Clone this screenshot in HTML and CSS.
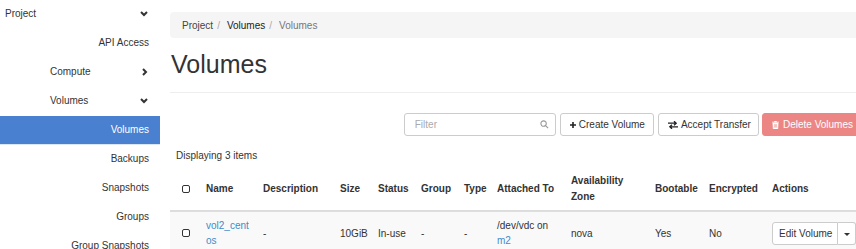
FILE: index.html
```html
<!DOCTYPE html>
<html>
<head>
<meta charset="utf-8">
<link rel="stylesheet" href="styles.css">
</head>
<body>
<div class="layout">
  <nav class="sidebar">
    <div class="nav-row top"><span>Project</span><svg class="chev" viewBox="0 0 8 6" width="8" height="6"><polyline points="1,1 4,4 7,1"/></svg></div>
    <div class="nav-row leaf"><span>API Access</span></div>
    <div class="nav-row group"><span>Compute</span><svg class="chev" viewBox="0 0 6 8" width="6" height="8"><polyline points="1,1 4,4 1,7"/></svg></div>
    <div class="nav-row group"><span>Volumes</span><svg class="chev" viewBox="0 0 8 6" width="8" height="6"><polyline points="1,1 4,4 7,1"/></svg></div>
    <div class="nav-row leaf active"><span>Volumes</span></div>
    <div class="nav-row leaf"><span>Backups</span></div>
    <div class="nav-row leaf"><span>Snapshots</span></div>
    <div class="nav-row leaf"><span>Groups</span></div>
    <div class="nav-row leaf"><span>Group Snapshots</span></div>
  </nav>
  <main class="main">
    <div class="breadcrumb">
      <span class="crumb">Project</span><span class="sep">/</span>
      <span class="crumb mid">Volumes</span><span class="sep">/</span>
      <span class="crumb current">Volumes</span>
    </div>
    <div class="page-header"><h1>Volumes</h1></div>
    <div class="toolbar">
      <div class="filter">
        <span class="placeholder">Filter</span>
        <svg class="search" viewBox="0 0 10 10" width="9" height="9"><circle cx="4" cy="4" r="3"/><line x1="6.2" y1="6.2" x2="9" y2="9"/></svg>
      </div>
      <button class="btn"><svg class="ico" viewBox="0 0 6 6" width="6" height="6"><path d="M2.2 0h1.6v2.2H6v1.6H3.8V6H2.2V3.8H0V2.2h2.2z" fill="#222"/></svg>Create Volume</button>
      <button class="btn accept"><svg class="ico" viewBox="0 0 10 8" width="10" height="8"><path d="M0 2.2h8M6 0.2l2.2 2-2.2 2M10 5.8H2M4 3.8L1.8 5.8 4 7.8" fill="none" stroke="#222" stroke-width="1.3"/></svg>Accept Transfer</button>
      <button class="btn danger"><svg class="ico" viewBox="0 0 8 9" width="7" height="8"><path d="M0 1.3h8M3 1.3V0h2v1.3M1 2.3h6l-.5 6.7h-5z" fill="#fff" stroke="#fff" stroke-width=".8"/><path d="M2.8 3.5v4M4 3.5v4M5.2 3.5v4" stroke="#ec8684" stroke-width=".6"/></svg>Delete Volumes</button>
    </div>
    <div class="count">Displaying 3 items</div>
    <table class="table">
      <colgroup>
        <col class="c-cb"><col class="c-name"><col class="c-desc"><col class="c-size"><col class="c-status"><col class="c-group"><col class="c-type"><col class="c-att"><col class="c-az"><col class="c-boot"><col class="c-enc"><col class="c-act">
      </colgroup>
      <thead>
        <tr>
          <th class="cb"><span class="check"></span></th>
          <th>Name</th><th>Description</th><th>Size</th><th>Status</th><th>Group</th><th>Type</th><th>Attached To</th><th>Availability Zone</th><th>Bootable</th><th>Encrypted</th><th>Actions</th>
        </tr>
      </thead>
      <tbody>
        <tr>
          <td class="cb"><span class="check"></span></td>
          <td><a class="link break">vol2_centos</a></td>
          <td>-</td><td>10GiB</td><td>In-use</td><td>-</td><td>-</td>
          <td>/dev/vdc on <a class="link">m2</a></td>
          <td>nova</td><td>Yes</td><td>No</td>
          <td class="act"><div class="split"><span class="split-main">Edit Volume</span><span class="split-caret"></span></div></td>
        </tr>
      </tbody>
    </table>
  </main>
</div>
</body>
</html>
```
FILE: styles.css
```css
* { box-sizing: border-box; }
body {
  margin: 0;
  font-family: "Liberation Sans", Arial, sans-serif;
  font-size: 10px;
  color: #333;
  background: #fff;
  overflow: hidden;
}
.layout { display: flex; width: 861px; }
.sidebar { width: 160px; flex: none; }
.nav-row {
  display: flex;
  align-items: center;
  height: 29px;
  padding: 0 11px 2px 5px;
  line-height: 15px;
}
.nav-row.top { justify-content: space-between; padding-right: 12px; }
.nav-row.group { padding-left: 50px; justify-content: space-between; padding-right: 12px; }
.nav-row.leaf { justify-content: flex-end; }
.nav-row.active { background: #4a80d0; color: #fff; border-bottom: 1px solid #dbe6f6; padding-bottom: 1px; }
.chev { fill: none; stroke: #333; stroke-width: 2; }

.main { flex: 1; padding: 12px 0 0 10px; min-width: 0; }
.breadcrumb {
  height: 26px;
  background: #f5f5f5;
  border-radius: 4px 0 0 4px;
  display: flex;
  align-items: center;
  padding: 0 12px;
}
.crumb { color: #444; }
.crumb.mid { color: #222; }
.crumb.current { color: #777; }
.sep { color: #aaa; padding: 0 7px 0 4px; }
.page-header {
  border-bottom: 1px solid #eee;
  padding-bottom: 14px;
}
h1 {
  margin: 13px 0 0 1px;
  font-size: 25px;
  font-weight: normal;
  line-height: 27px;
  color: #333;
}
.toolbar {
  display: flex;
  justify-content: flex-end;
  gap: 4px;
  margin-top: 20px;
  height: 23px;
}
.filter {
  width: 152px;
  border: 1px solid #ccc;
  border-radius: 3px;
  display: flex;
  align-items: center;
  justify-content: space-between;
  padding: 0 6px 0 10px;
}
.placeholder { color: #aaa; }
.search { fill: none; stroke: #999; stroke-width: 1.2; }
.btn {
  font: inherit;
  color: #333;
  background: #fff;
  border: 1px solid #ccc;
  border-radius: 3px;
  padding: 0 8px 0 9px;
  display: flex;
  align-items: center;
  gap: 3px;
  height: 23px;
}
.btn.accept { padding-right: 7px; }
.btn.danger {
  background: #ec8684;
  border-color: #ec8684;
  color: #fff;
  gap: 4px;
  margin-left: -1px;
  padding-right: 7px;
}
.ico { flex: none; }
.count { margin-top: 12px; line-height: 15px; padding-left: 6px; }

.table {
  width: 691px;
  table-layout: fixed;
  border-collapse: collapse;
}
.c-cb { width: 28px; }
.c-name { width: 57px; }
.c-desc { width: 77px; }
.c-size { width: 38px; }
.c-status { width: 43px; }
.c-group { width: 43px; }
.c-type { width: 33px; }
.c-att { width: 74px; }
.c-az { width: 84px; }
.c-boot { width: 54px; }
.c-enc { width: 63px; }
.c-act { width: 97px; }
.table th {
  text-align: left;
  font-weight: bold;
  padding: 10px 4px 5px 8px;
  line-height: 16px;
  vertical-align: middle;
  border-bottom: 2px solid #ddd;
}
.table td {
  padding: 6px 4px 6px 8px;
  line-height: 15px;
  vertical-align: middle;
  background: #f9f9f9;
}
.table .cb { padding-left: 12px; padding-right: 0; }
.check {
  display: block;
  width: 8px;
  height: 8px;
  border: 1px solid #333;
  border-radius: 2px;
  background: #fff;
}
.link { color: #428bca; }
.break { word-break: break-all; }
.act { white-space: nowrap; }
.split { display: flex; height: 23px; }
.split-main {
  border: 1px solid #ccc;
  border-radius: 3px 0 0 3px;
  background: #fff;
  padding: 0 5px 0 6px;
  display: flex;
  align-items: center;
}
.split-caret {
  border: 1px solid #ccc;
  border-left: none;
  border-radius: 0 3px 3px 0;
  background: #fff;
  width: 18px;
  position: relative;
}
.split-caret::after {
  content: "";
  position: absolute;
  left: 6px;
  top: 10px;
  border-left: 3px solid transparent;
  border-right: 3px solid transparent;
  border-top: 3px solid #333;
}
```
